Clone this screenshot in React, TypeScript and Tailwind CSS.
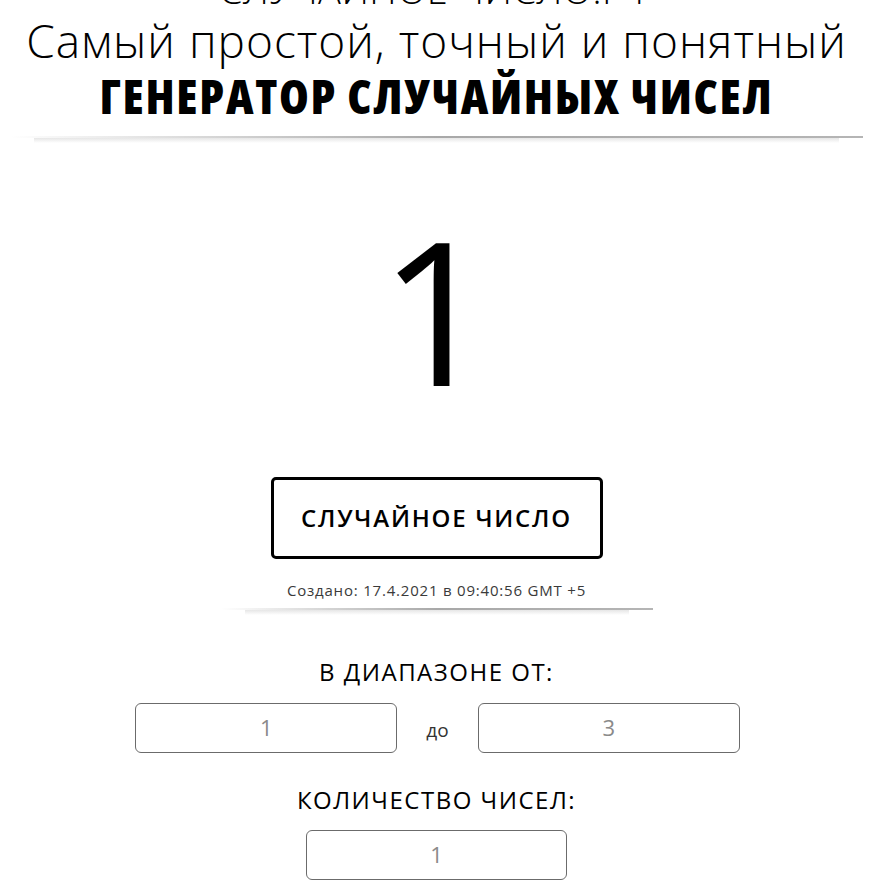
import React from "react";

const Divider = ({ className }: { className: string }) => {
  return (
    <div className={`flex flex-col ${className}`}>
      <div className="h-[2px] bg-gradient-to-r from-transparent via-[#a8a8a8] to-[#b5b5b5]" />
      <div className="h-[5px] bg-gradient-to-b from-[#e6e6e6] to-transparent mx-6" />
    </div>
  );
};

const Field = ({ value, className }: { value: string; className: string }) => {
  return (
    <div
      className={`h-[50px] border border-[#6b6b6b] rounded-[6px] flex items-center justify-center text-[22px] text-[#8a8a8a] ${className}`}
    >
      {value}
    </div>
  );
};

export default function App() {
  return (
    <div
      className="w-full bg-white text-black overflow-hidden h-[896px]"
      style={{ fontFamily: '"Open Sans", "Noto Sans", sans-serif' }}
    >
      <div className="flex flex-col items-center -mt-[32px]">
        <div className="text-[38px] font-light leading-[42px] tracking-[0.5px]">
          СЛУЧАЙНОЕ ЧИСЛО.РФ
        </div>
        <h2 className="text-[46px] font-light leading-[56px] tracking-[1px] mt-[2px]">
          Самый простой, точный и понятный
        </h2>
        <h1 className="text-[48px] font-extrabold font-stretch-condensed tracking-[1.7px] leading-[56px]">
          ГЕНЕРАТОР СЛУЧАЙНЫХ ЧИСЕЛ
        </h1>
      </div>
      <Divider className="mx-[10px] mt-[12px]" />

      <div className="flex flex-col items-center">
        <div className="text-[200px] leading-[1] mt-[66px] font-normal">1</div>

        <button className="mt-[68px] w-[332px] h-[82px] border-[3px] border-black rounded-[5px] bg-white text-[24px] font-semibold tracking-[1.8px]">
          СЛУЧАЙНОЕ ЧИСЛО
        </button>
        <p className="mt-[20px] text-[15px] text-[#3a3a3a] tracking-[0.8px]">
          Создано: 17.4.2021 в 09:40:56 GMT +5
        </p>
        <Divider className="w-[432px] mt-[6px]" />

        <h3 className="mt-[40px] text-[24px] tracking-[1.5px] leading-[34px]">
          В ДИАПАЗОНЕ ОТ:
        </h3>
        <div className="flex items-center mt-[14px] gap-[29px] ml-[2px]">
          <Field value="1" className="w-[262px]" />
          <span className="text-[19px] text-[#333] pt-[6px]">до</span>
          <Field value="3" className="w-[262px]" />
        </div>

        <h3 className="mt-[30px] text-[24px] tracking-[1.5px] leading-[34px]">
          КОЛИЧЕСТВО ЧИСЕЛ:
        </h3>
        <Field value="1" className="w-[261px] mt-[13px]" />
      </div>
    </div>
  );
}
